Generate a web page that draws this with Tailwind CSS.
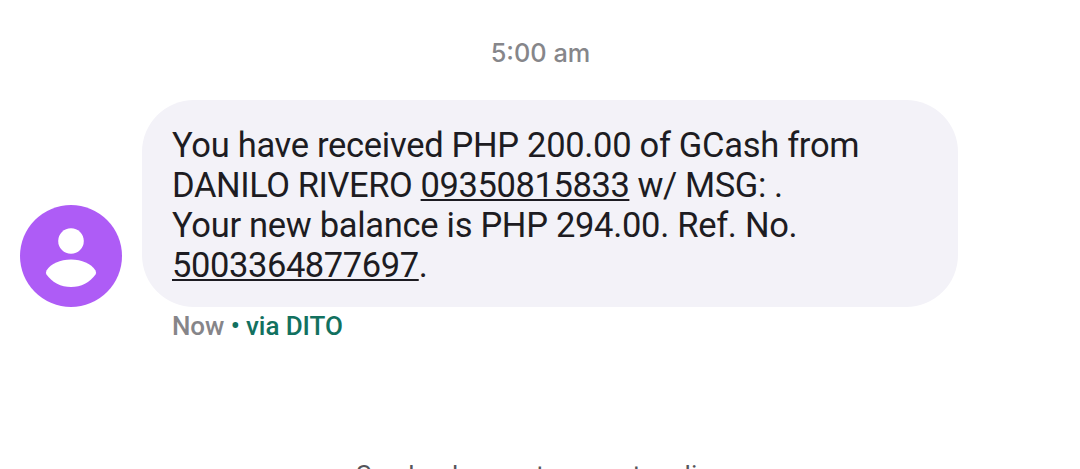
<!DOCTYPE html>
<html lang="en">
<head>
    <meta charset="UTF-8">
    <meta name="viewport" content="width=device-width, initial-scale=1.0">
    <title>Messages</title>
    <script src="https://cdn.jsdelivr.net/npm/@tailwindcss/browser@4"></script>
</head>
<body class="bg-white h-screen overflow-hidden font-['Roboto',sans-serif]">
    <main class="h-[469px] overflow-hidden flex flex-col">
        <p class="mt-[38px] h-[30px] pl-px text-center text-[25.3px] leading-[30px] font-medium text-[#86868a] font-['Inter',sans-serif]">5:00 am</p>

        <div class="mt-8 ml-5 flex items-end gap-5">
            <!-- Avatar -->
            <svg class="size-[102px] shrink-0" viewBox="0 0 102 102">
                <circle cx="51" cy="51" r="51" fill="#ae5cf6"/>
                <circle cx="51" cy="36" r="12.8" fill="#fff"/>
                <path d="M26.500 65.500C31 58.500 40 54.500 51 54.500s20 4 24.500 11q1 2 0 4C70 77.500 61 82 51 82s-19-4.500-24.500-12.500q-1-2 0-4z" fill="#fff"/>
            </svg>

            <div class="w-[816px] h-[207px] rounded-[52px] bg-[#f3f2f8] pl-[30px] pt-[25px] text-[34.5px] leading-10 tracking-[-0.3px] text-[#1d1c22] whitespace-nowrap">
                <p>You have received PHP 200.00 of GCash from</p>
                <p class="tracking-[-0.41px]">DANILO RIVERO <a href="tel:09350815833" class="underline decoration-[1.5px] underline-offset-2">09350815833</a> w/ MSG: .</p>
                <p>Your new balance is PHP 294.00. Ref. No.</p>
                <p class="tracking-[-0.41px]"><a href="tel:5003364877697" class="underline decoration-[1.5px] underline-offset-2">5003364877697</a>.</p>
            </div>
        </div>

        <p class="mt-1 ml-[172px] text-[26px] leading-[30px] font-medium tracking-[-0.08px] text-[#868589]">Now <span class="text-[#12715f]">• via DITO</span></p>

        <p class="mt-[119px] ml-[356px] shrink-0 text-[26px] leading-[30px] tracking-[0.03px] text-[#55555a] whitespace-nowrap">Sender does not support replies</p>
    </main>
</body>
</html>
